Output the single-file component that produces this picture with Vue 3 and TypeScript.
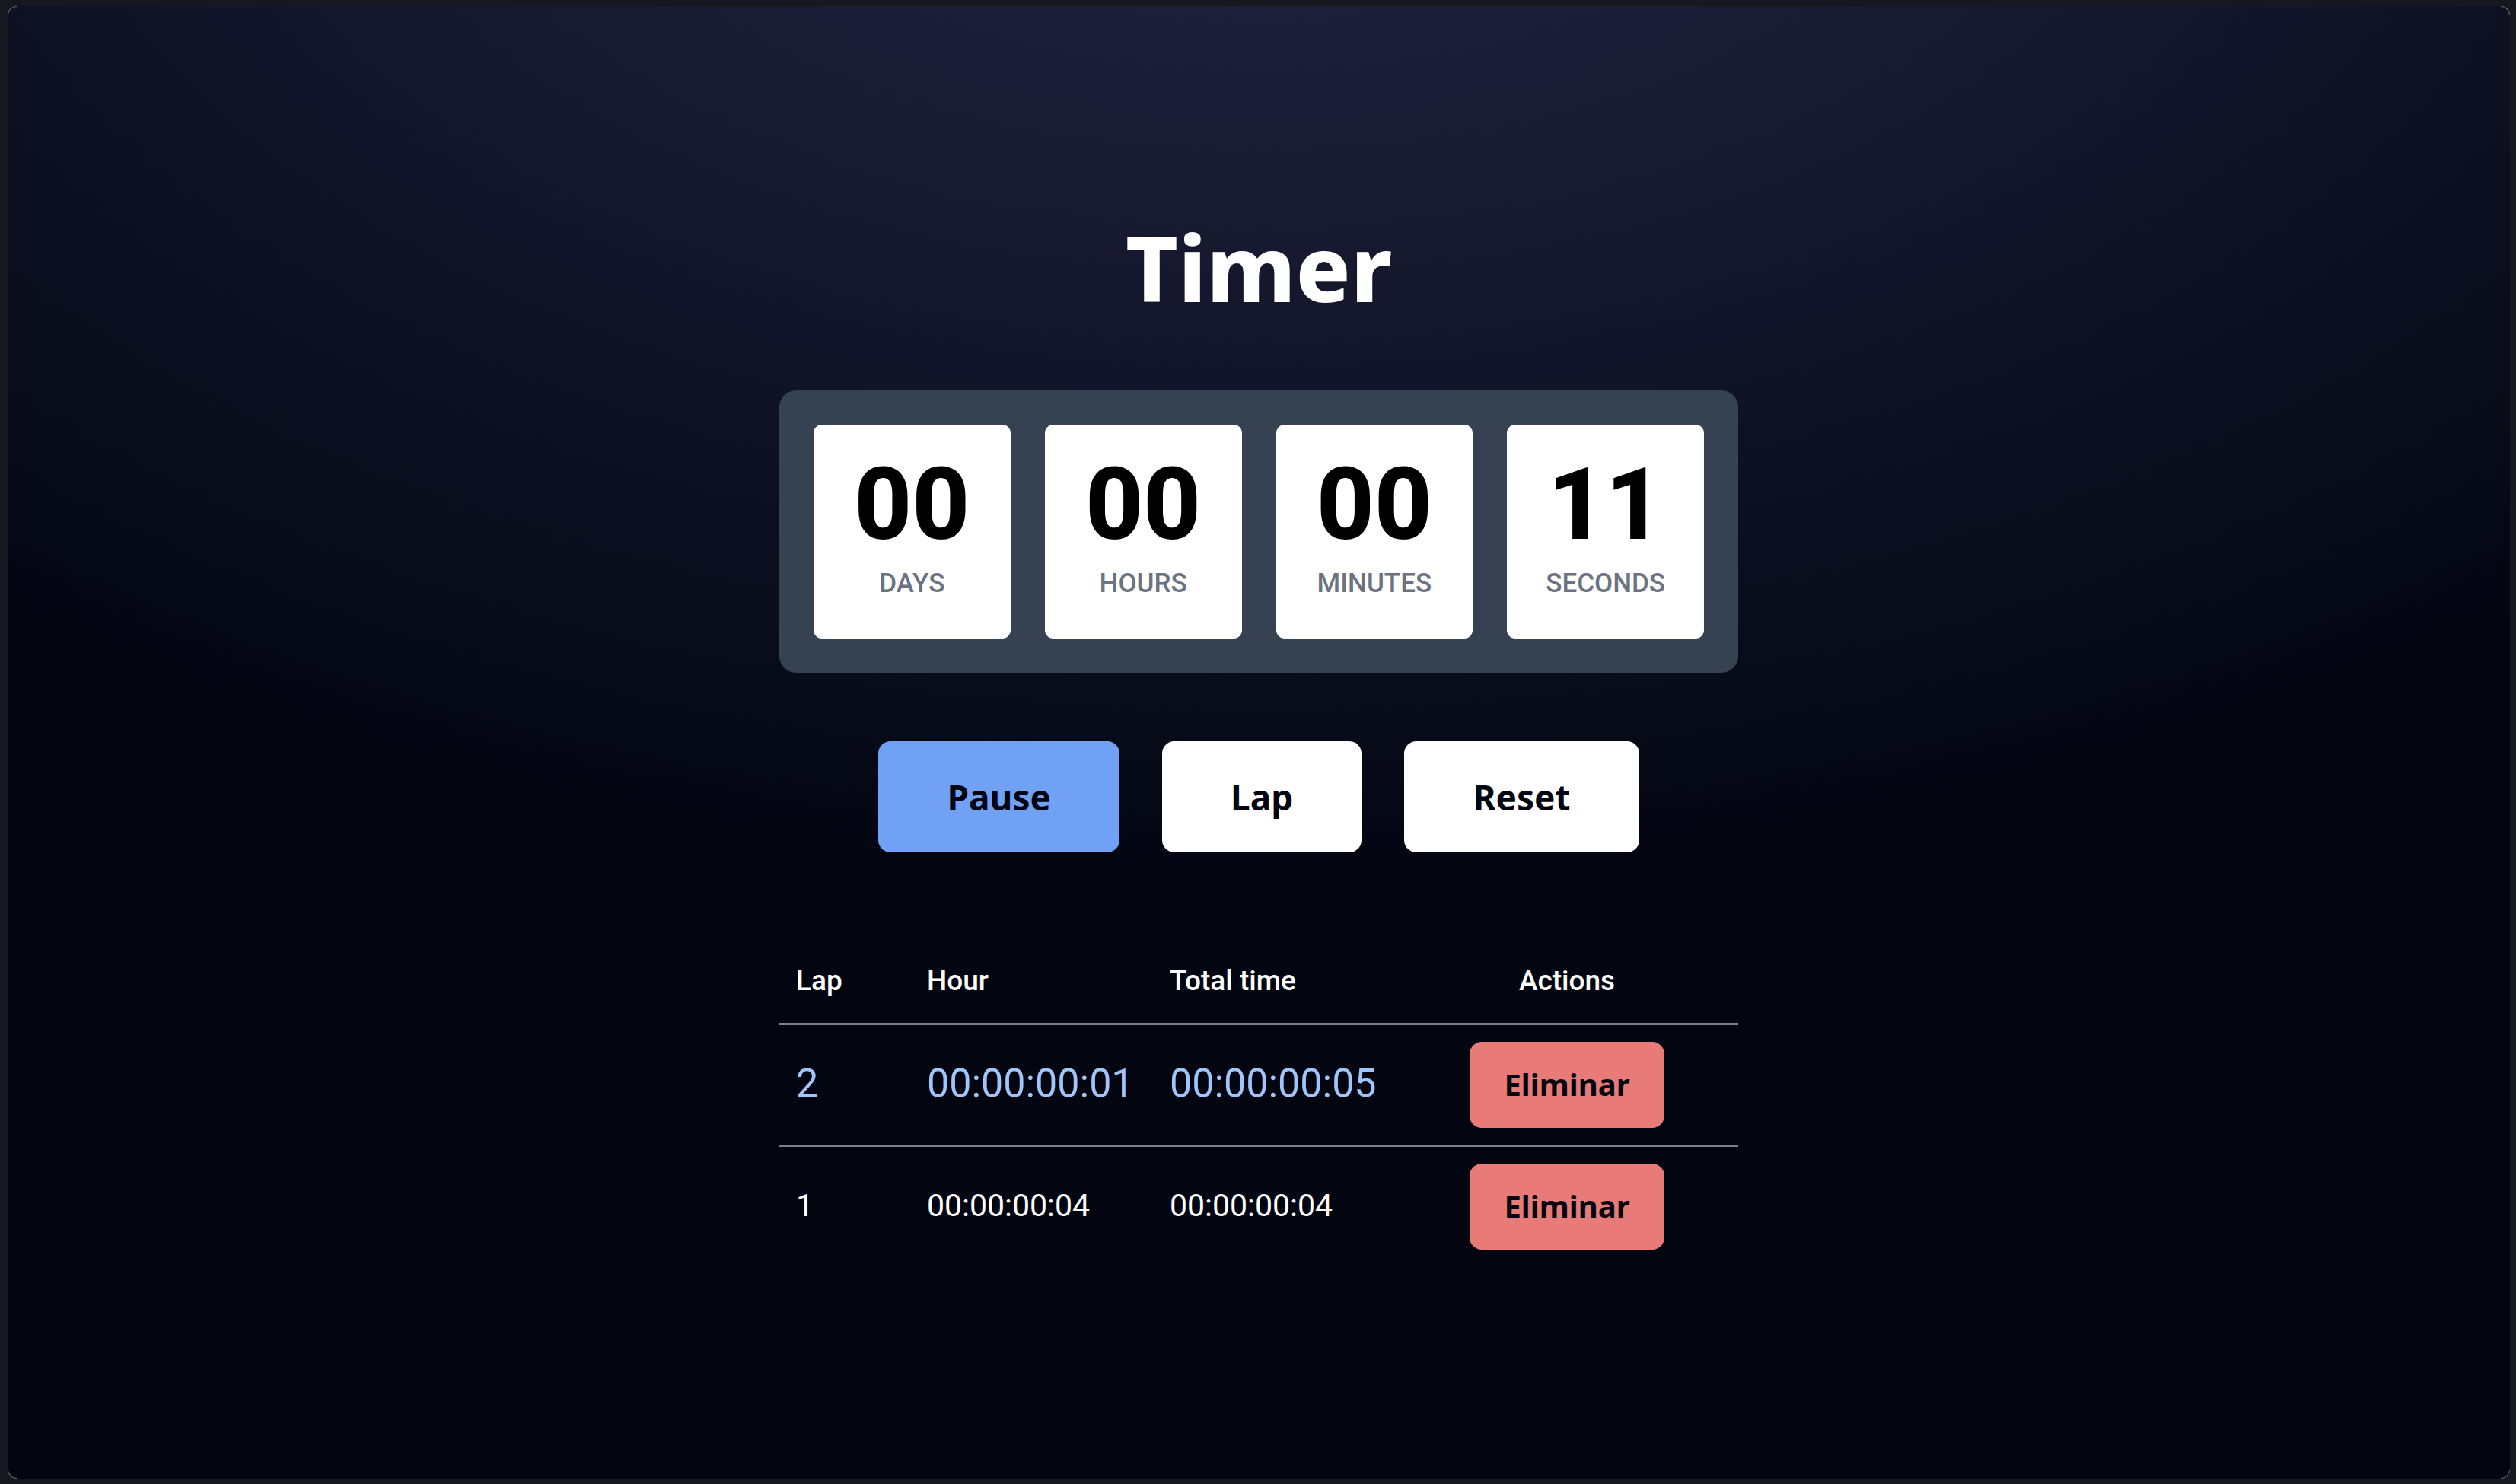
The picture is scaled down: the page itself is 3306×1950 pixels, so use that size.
<script setup lang="ts">
import { computed, ref } from 'vue'

interface Lap {
  id: number
  lapSeconds: number
  totalSeconds: number
}

const elapsed = ref(11)
const running = ref(true)
const laps = ref<Lap[]>([
  { id: 2, lapSeconds: 1, totalSeconds: 5 },
  { id: 1, lapSeconds: 4, totalSeconds: 4 },
])

const pad = (value: number): string => String(value).padStart(2, '0')

function split(total: number): string[] {
  return [
    Math.floor(total / 86400),
    Math.floor(total / 3600) % 24,
    Math.floor(total / 60) % 60,
    total % 60,
  ].map(pad)
}

const units = ['DAYS', 'HOURS', 'MINUTES', 'SECONDS']
const cards = computed(() =>
  split(elapsed.value).map((value, i) => ({ value, label: units[i] })),
)

const format = (total: number): string => split(total).join(':')

function addLap(): void {
  const last = laps.value[0]
  laps.value.unshift({
    id: last ? last.id + 1 : 1,
    lapSeconds: elapsed.value - (last ? last.totalSeconds : 0),
    totalSeconds: elapsed.value,
  })
}

function removeLap(id: number): void {
  laps.value = laps.value.filter((lap) => lap.id !== id)
}

function reset(): void {
  elapsed.value = 0
  running.value = false
  laps.value = []
}
</script>

<template>
  <div class="page">
    <main class="frame">
      <span class="corner top left" aria-hidden="true"></span>
      <span class="corner top right" aria-hidden="true"></span>
      <span class="corner bottom left" aria-hidden="true"></span>
      <span class="corner bottom right" aria-hidden="true"></span>

      <div class="content">
        <h1 class="title">Timer</h1>

        <section class="clock" aria-label="Elapsed time">
          <div v-for="card in cards" :key="card.label" class="card">
            <span class="value">{{ card.value }}</span>
            <span class="label">{{ card.label }}</span>
          </div>
        </section>

        <div class="controls">
          <button type="button" class="button primary" @click="running = !running">
            {{ running ? 'Pause' : 'Start' }}
          </button>
          <button type="button" class="button" @click="addLap">Lap</button>
          <button type="button" class="button" @click="reset">Reset</button>
        </div>

        <table class="laps">
          <thead>
            <tr>
              <th class="col-lap" scope="col">Lap</th>
              <th class="col-time" scope="col">Hour</th>
              <th class="col-time" scope="col">Total time</th>
              <th class="actions" scope="col">Actions</th>
            </tr>
          </thead>
          <tbody>
            <tr v-for="(lap, i) in laps" :key="lap.id" :class="{ latest: i === 0 }">
              <td>{{ lap.id }}</td>
              <td>{{ format(lap.lapSeconds) }}</td>
              <td>{{ format(lap.totalSeconds) }}</td>
              <td class="actions">
                <button type="button" class="remove" @click="removeLap(lap.id)">Eliminar</button>
              </td>
            </tr>
          </tbody>
        </table>
      </div>
    </main>
  </div>
</template>

<style>
body {
  margin: 0;
  background: #171720;
}
</style>

<style scoped>
.page {
  box-sizing: border-box;
  display: flex;
  min-height: 100vh;
  padding: 8px 8px 7px 10px;
  background: #171720;
  color: #fff;
  font-family: Roboto, 'Noto Sans', sans-serif;
}

.frame {
  position: relative;
  flex: 1;
  display: flex;
  align-items: center;
  justify-content: center;
  border-radius: 12px;
  background:
    radial-gradient(ellipse 80% 80% at 50% -20%, rgba(120, 119, 198, 0.3), rgba(255, 255, 255, 0)),
    #030611;
}

.corner {
  position: absolute;
  width: 12px;
  height: 12px;
  box-sizing: border-box;
  border: 0 solid #6b6d78;
}

.top {
  top: 0;
  border-top-width: 1px;
}

.bottom {
  bottom: 0;
  border-bottom-width: 1px;
}

.left {
  left: 0;
  border-left-width: 1px;
}

.right {
  right: 0;
  border-right-width: 1px;
}

.top.left {
  border-top-left-radius: 12px;
}

.top.right {
  border-top-right-radius: 12px;
}

.bottom.left {
  border-bottom-left-radius: 12px;
}

.bottom.right {
  border-bottom-right-radius: 12px;
}

.content {
  display: flex;
  flex-direction: column;
  align-items: center;
  gap: 90px;
  width: 100%;
  max-width: 1260px;
}

.title {
  margin: 0;
  padding-bottom: 8px;
  font: 800 119px/128px 'Noto Sans', sans-serif;
}

.clock {
  box-sizing: border-box;
  display: flex;
  gap: 45px;
  width: 100%;
  padding: 45px;
  border-radius: 22px;
  background: #364152;
}

.card {
  flex: 1 1 0;
  display: flex;
  flex-direction: column;
  align-items: center;
  gap: 12px;
  padding: 38px 0 48px;
  border-radius: 11px;
  background: #fff;
}

.value {
  color: #000;
  font-size: 132px;
  font-weight: 800;
  line-height: 135px;
}

.label {
  color: #6b7280;
  font-size: 35px;
  font-weight: 500;
  line-height: 48px;
}

.controls {
  display: flex;
  gap: 56px;
}

.button {
  padding: 42px 90px;
  border: 0;
  border-radius: 16px;
  background: #fff;
  color: #030611;
  font: 700 46px/62px 'Noto Sans', sans-serif;
  cursor: pointer;
}

.primary {
  background: #70a1f4;
}

.laps {
  width: 100%;
  margin-top: 22px;
  table-layout: fixed;
  border-collapse: separate;
  border-spacing: 0;
}

.laps th {
  height: 112px;
  padding: 0 22px;
  font-size: 37px;
  font-weight: 500;
  text-align: left;
}

.laps td {
  height: 113px;
  padding: 20px 22px 24px;
  border-top: 3px solid #7f8087;
  font-size: 41px;
  line-height: 60px;
  white-space: nowrap;
}

.laps .latest td {
  color: #9fc5fb;
  font-size: 52px;
}

.laps .actions {
  text-align: center;
}

.laps td.actions {
  padding: 22px;
}

.col-lap {
  width: 128px;
}

.col-time {
  width: 275px;
}

.remove {
  display: block;
  margin: 0 auto;
  padding: 25px 45px 27px;
  border: 0;
  border-radius: 16px;
  background: #e87a77;
  color: #030611;
  font: 700 40px/61px 'Noto Sans', sans-serif;
  cursor: pointer;
}
</style>
